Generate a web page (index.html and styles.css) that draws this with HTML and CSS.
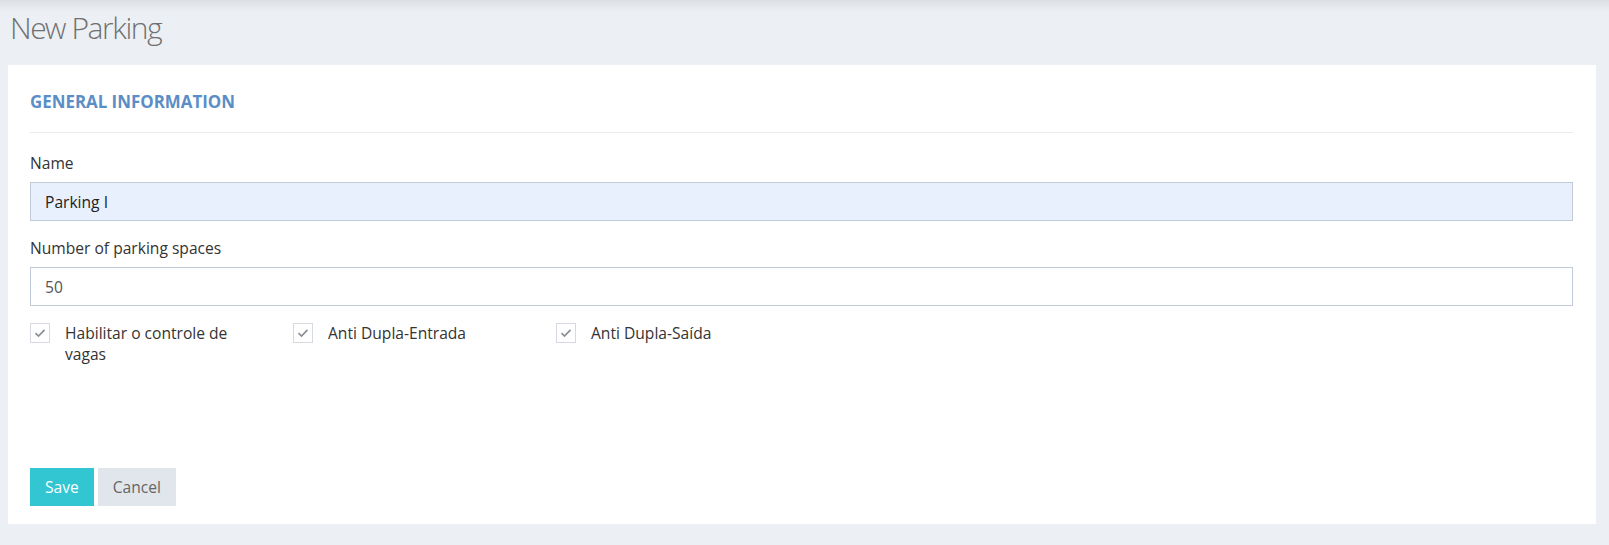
FILE: index.html
```html
<!DOCTYPE html>
<html lang="pt-BR">
<head>
    <meta charset="UTF-8">
    <meta name="viewport" content="width=device-width, initial-scale=1.0">
    <title>New Parking</title>
    <link rel="stylesheet" href="styles.css">
</head>
<body>
    <div class="page">
        <h1 class="page-title">New Parking</h1>

        <div class="portlet">
            <div class="portlet-title">
                <span class="caption">General Information</span>
            </div>

            <form class="portlet-body">
                <div class="form-group">
                    <label for="name">Name</label>
                    <input type="text" id="name" class="form-control autofilled" value="Parking I">
                </div>

                <div class="form-group">
                    <label for="spaces">Number of parking spaces</label>
                    <input type="text" id="spaces" class="form-control" value="50">
                </div>

                <div class="checkbox-row">
                    <label class="check">
                        <span class="check-box">
                            <svg width="12" height="10" viewBox="0 0 12 10"><polyline points="1.5,5.2 4.5,8 10.5,1.8" fill="none" stroke="#8a8f96" stroke-width="1.7"/></svg>
                        </span>
                        <span class="check-text">Habilitar o controle de vagas</span>
                    </label>
                    <label class="check">
                        <span class="check-box">
                            <svg width="12" height="10" viewBox="0 0 12 10"><polyline points="1.5,5.2 4.5,8 10.5,1.8" fill="none" stroke="#8a8f96" stroke-width="1.7"/></svg>
                        </span>
                        <span class="check-text">Anti Dupla-Entrada</span>
                    </label>
                    <label class="check">
                        <span class="check-box">
                            <svg width="12" height="10" viewBox="0 0 12 10"><polyline points="1.5,5.2 4.5,8 10.5,1.8" fill="none" stroke="#8a8f96" stroke-width="1.7"/></svg>
                        </span>
                        <span class="check-text">Anti Dupla-Saída</span>
                    </label>
                </div>

                <div class="form-actions">
                    <button type="button" class="btn btn-save">Save</button>
                    <button type="button" class="btn btn-default">Cancel</button>
                </div>
            </form>
        </div>
    </div>
</body>
</html>
```

FILE: styles.css
```css
* {
    margin: 0;
    padding: 0;
    box-sizing: border-box;
}

body {
    font-family: 'Open Sans', 'Noto Sans', sans-serif;
    font-size: 15.6px;
    color: #333;
    background: linear-gradient(to bottom, #dcdfe4 0, #eceff4 12px) no-repeat, #eceff4;
    height: 100vh;
    overflow: hidden;
}

.page {
    padding: 0 13px 0 8px;
}

/* light weight is not always installed, so the regular face is narrowed a bit */
.page-title {
    font-family: 'Open Sans Light', 'Open Sans', sans-serif;
    font-size: 30px;
    font-weight: 300;
    letter-spacing: -1.4px;
    line-height: 41px;
    color: #707070;
    padding: 7px 0 0 2px;
    margin-bottom: 17px;
}

.portlet {
    background-color: #fff;
    padding: 26px 23px 18px 22px;
}

.portlet-title {
    padding-bottom: 19px;
    border-bottom: 1px solid #e9ecf1;
    margin-bottom: 20px;
}

.caption {
    font-size: 16.9px;
    font-weight: 700;
    line-height: 22px;
    text-transform: uppercase;
    color: #5b8ec6;
}

.form-group {
    margin-bottom: 17px;
}

.form-group label {
    display: block;
    line-height: 21px;
    margin-bottom: 8px;
    color: #333;
}

.form-control {
    display: block;
    width: 100%;
    height: 39px;
    padding: 0 14px;
    font-family: inherit;
    font-size: 15.6px;
    color: #555;
    background-color: #fff;
    border: 1px solid #c2cad8;
    outline: none;
}

.form-control.autofilled {
    background-color: #e8f0fe;
    color: #222;
}

.checkbox-row {
    display: flex;
    gap: 30px;
    margin-top: 17px;
}

.check {
    display: flex;
    width: 233px;
    gap: 15px;
    line-height: 21px;
    cursor: pointer;
}

.check-box {
    flex: none;
    width: 20px;
    height: 20px;
    border: 1px solid #d6dae0;
    display: flex;
    align-items: center;
    justify-content: center;
}

.check-text {
    color: #333;
}

.form-actions {
    margin-top: 103px;
    display: flex;
    gap: 4px;
}

.btn {
    height: 38px;
    padding: 0 15px;
    border: none;
    font-family: inherit;
    font-size: 15.6px;
    cursor: pointer;
}

.btn-save {
    background-color: #32c5d2;
    color: #fff;
}

.btn-default {
    background-color: #e1e5ec;
    color: #666;
}
```
